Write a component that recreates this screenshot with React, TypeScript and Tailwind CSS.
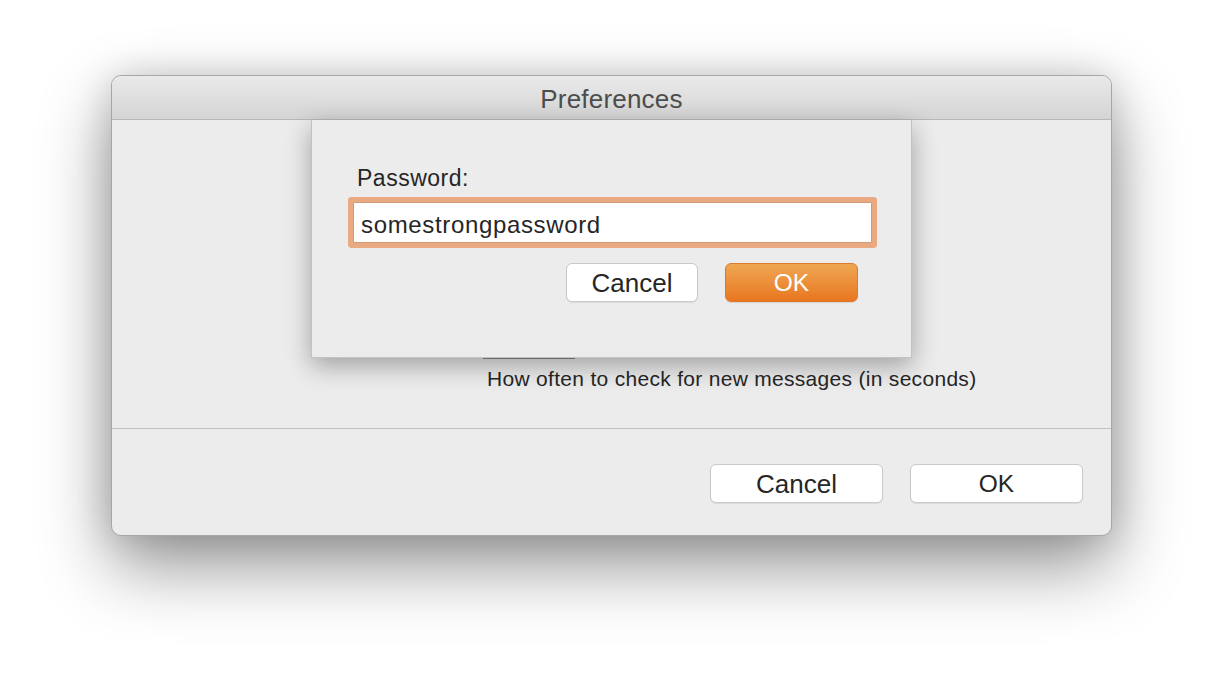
import React from "react";

const sans = { fontFamily: '"Liberation Sans", Arial, sans-serif' };

export default function App() {
  return (
    <div
      className="w-[1224px] h-[684px] bg-white pt-[75px] pl-[111px] overflow-hidden"
      style={sans}
    >
      <div className="relative w-[1001px] h-[461px] rounded-[10px] border border-[#a6a6a6] bg-[#ececec] shadow-[0_30px_70px_rgba(0,0,0,0.42),0_0_36px_rgba(0,0,0,0.14)] flex flex-col">
        {/* Title bar */}
        <div className="h-[44px] shrink-0 rounded-t-[9px] border-b border-[#b8b8b8] bg-gradient-to-b from-[#eaeaea] to-[#d4d4d4] flex items-center justify-center pt-[3px]">
          <span className="text-[26px] leading-[30px] text-[#4d4d4d] tracking-[0.2px]">
            Preferences
          </span>
        </div>

        {/* Body */}
        <div className="h-[309px] shrink-0 border-b border-[#c2c2c2] pl-[371px] pt-[210px] flex flex-col">
          <div className="w-[92px] h-[29px] border-b border-[#8a8a8a]" />
          <div className="mt-[8px] ml-[4px] text-[21px] leading-[24px] text-[#262626] tracking-[0.3px] whitespace-nowrap">
            How often to check for new messages (in seconds)
          </div>
        </div>

        {/* Footer */}
        <div className="flex-1 flex justify-end items-start pt-[35px] pr-[28px] gap-[27px]">
          <button className="w-[173px] h-[39px] rounded-[6px] bg-white border border-[#c9c9c9] shadow-[0_1px_1px_rgba(0,0,0,0.08)] text-[26px] leading-none text-[#262626] flex items-center justify-center">
            Cancel
          </button>
          <button className="w-[173px] h-[39px] rounded-[6px] bg-white border border-[#c9c9c9] shadow-[0_1px_1px_rgba(0,0,0,0.08)] text-[24.5px] leading-none text-[#262626] flex items-center justify-center pt-[2px]">
            OK
          </button>
        </div>

        {/* Sheet */}
        <div className="absolute left-[199px] top-[44px] w-[601px] h-[238px] bg-[#ececec] border-x border-b border-[#c2c2c2] shadow-[0_8px_24px_rgba(0,0,0,0.32)] pl-[41px] pt-[44px] flex flex-col">
          <div className="pl-[4px] text-[23px] leading-[28px] text-[#262626] tracking-[0.5px]">
            Password:
          </div>
          <div className="mt-[10px] w-[519px] h-[41px] bg-white border border-[#d29b77] shadow-[0_0_0_5px_#eaaa81] rounded-[1px] flex items-center pl-[7px] pt-[4px]">
            <span className="text-[24px] leading-none text-[#262626] tracking-[0.65px]">
              somestrongpassword
            </span>
          </div>
          <div className="mt-[20px] w-[519px] pr-[14px] flex justify-end gap-[27px]">
            <button className="w-[132px] h-[39px] rounded-[6px] bg-white border border-[#c9c9c9] shadow-[0_1px_1px_rgba(0,0,0,0.08)] text-[26px] leading-none text-[#262626] flex items-center justify-center">
              Cancel
            </button>
            <button className="w-[133px] h-[39px] rounded-[6px] bg-gradient-to-b from-[#efa652] to-[#e8761d] border border-[#de7a2c] shadow-[0_1px_1px_rgba(0,0,0,0.1)] text-[24.5px] leading-none text-white flex items-center justify-center pt-[1px]">
              OK
            </button>
          </div>
        </div>
      </div>
    </div>
  );
}
